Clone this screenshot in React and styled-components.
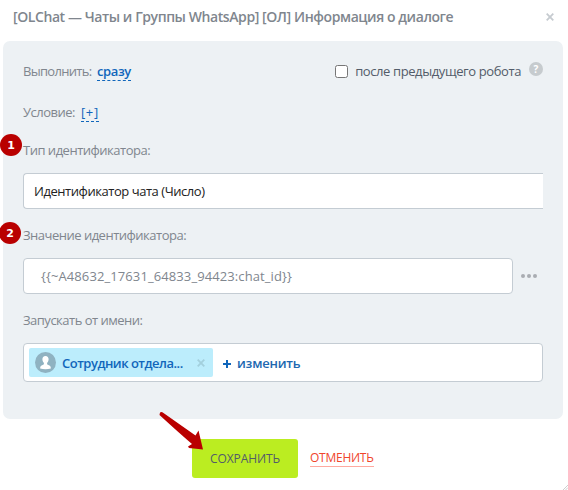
import React from 'react';
import styled, { createGlobalStyle } from 'styled-components';

const Global = createGlobalStyle`
  * { box-sizing: border-box; }
  body { margin: 0; background: #fff; overflow: hidden; }
`;

const Dialog = styled.main`
  position: relative;
  width: 568px;
  height: 490px;
  background: #fff;
  color: #80868e;
  font: 13px/20px "Open Sans", "Noto Sans", sans-serif;
`;

const Header = styled.header`
  display: flex;
  justify-content: space-between;
  height: 41px;
  padding: 7px 14px 0 13px;
`;

const Title = styled.h1`
  margin: 0;
  font-size: 14px;
  line-height: 20px;
  font-weight: 600;
  letter-spacing: -0.42px;
  color: #80868e;
  white-space: nowrap;
`;

const CloseIcon = styled.svg`
  width: 8px;
  height: 8px;
  flex: none;
  margin-top: ${p => p.$top || 0}px;
  stroke: ${p => p.$color};
  stroke-width: 1.8;
`;

const Panel = styled.section`
  display: flex;
  flex-direction: column;
  width: 560px;
  height: 378px;
  margin-left: 3px;
  padding: 20px 20px 0;
  border-radius: 7px;
  background: #edf1f4;
`;

const Row = styled.div`
  display: flex;
  height: 20px;
  margin-bottom: ${p => p.$gap}px;
`;

const Label = styled.span`
  height: 20px;
  letter-spacing: ${p => p.$spacing ?? -0.5}px;
  white-space: nowrap;
`;

const LeadLabel = styled(Label)`
  width: ${p => p.$width}px;
`;

const DashedLink = styled.a`
  height: 20px;
  width: ${p => p.$width}px;
  color: #1066bb;
  font-weight: ${p => p.$weight || 400};
  letter-spacing: ${p => p.$spacing || 0}px;
  white-space: nowrap;
  border-bottom: 1px dashed #1066bb;
`;

const AfterOption = styled.label`
  display: flex;
  margin-left: auto;
  color: #535c69;
`;

const Checkbox = styled.input`
  appearance: none;
  width: 13px;
  height: 13px;
  margin: 4px 7px 0 0;
  border: 1px solid #767676;
  border-radius: 2.5px;
  background: #fff;
`;

const Help = styled.span`
  width: 14px;
  height: 14px;
  margin: 1px 0 0 8px;
  border-radius: 50%;
  background: #c6cbce;
  color: #fff;
  font-size: 10px;
  font-weight: 700;
  line-height: 14px;
  text-align: center;
`;

const FieldLabel = styled(Label)`
  margin-bottom: 13px;
`;

const Select = styled.div`
  height: 36px;
  margin-bottom: 16px;
  padding-left: 10px;
  border: 1px solid #c4ccd3;
  border-right: 0;
  border-radius: 4px 0 0 4px;
  background: #fff;
  color: #222;
  line-height: 34px;
  letter-spacing: -0.45px;
`;

const ValueRow = styled.div`
  display: flex;
  align-items: center;
  height: 36px;
  margin-bottom: 16px;
`;

const ValueInput = styled.div`
  width: 490px;
  height: 36px;
  padding-left: 17px;
  border: 1px solid #c4ccd3;
  border-radius: 4px;
  background: #fff;
  line-height: 35px;
  letter-spacing: 0.1px;
`;

const Dots = styled.svg`
  width: 16px;
  height: 4px;
  margin-left: 8px;
  fill: #a9adb2;
`;

const UserBox = styled.div`
  display: flex;
  flex: none;
  height: 39px;
  padding: 4px 5px;
  border: 1px solid #c4ccd3;
  border-radius: 4px;
  background: #fff;
`;

const UserTag = styled.div`
  display: flex;
  width: 184px;
  height: 29px;
  padding: 4px 8px 0 6px;
  border-radius: 2px;
  background: #bcedfc;
  color: #1066bb;
  font-weight: 600;
`;

const Avatar = styled.svg`
  width: 21px;
  height: 21px;
  flex: none;
`;

const UserName = styled.span`
  flex: 1;
  margin: 1px 0 0 6px;
  white-space: nowrap;
  letter-spacing: -0.5px;
`;

const Change = styled.a`
  display: flex;
  gap: 6px;
  margin: 5px 0 0 10px;
  color: #2067b0;
  font-weight: 600;
  letter-spacing: -0.2px;
`;

const PlusIcon = styled.svg`
  width: 8px;
  height: 8px;
  margin-top: 7px;
  stroke: #1066bb;
  stroke-width: 2;
`;

const Footer = styled.footer`
  display: flex;
  padding: 20px 0 0 192px;
`;

const SaveButton = styled.button`
  width: 106px;
  height: 39px;
  padding: 0;
  border: 0;
  border-radius: 3px;
  background: #bbed21;
  color: #535c69;
  font: 12px/39px "Open Sans", "Noto Sans", sans-serif;
  letter-spacing: -0.1px;
`;

const CancelLink = styled.a`
  width: 64px;
  height: 19px;
  margin: 9px 0 0 12px;
  border-bottom: 1px solid #ffaaa0;
  color: #f0452c;
  font-size: 12px;
  line-height: 19px;
  white-space: nowrap;
  letter-spacing: -0.25px;
`;

const Marker = styled.span`
  position: absolute;
  left: ${p => p.$x}px;
  top: ${p => p.$y}px;
  width: 22px;
  height: 22px;
  border-radius: 50%;
  background: #b90000;
  color: #fff;
  font: bold 11px/23px "DejaVu Sans", sans-serif;
  text-align: center;
`;

const Arrow = styled.svg`
  position: absolute;
  left: 158px;
  top: 410px;
  width: 48px;
  height: 42px;
`;

const ResizeGrip = styled.svg`
  position: absolute;
  right: 0;
  bottom: 0;
  width: 5px;
  height: 5px;
  stroke: #aaa;
  stroke-width: 0.7;
`;

const Cross = props => (
  <CloseIcon viewBox="0 0 8 8" {...props}>
    <path d="M.7.7 7.3 7.3M7.3.7.7 7.3" />
  </CloseIcon>
);

export default function App() {
  return (
    <>
      <Global />
      <Dialog>
        <Header>
          <Title>[OLChat — Чаты и Группы WhatsApp] [ОЛ] Информация о диалоге</Title>
          <Cross $top={6} $color="#c6cbd0" />
        </Header>
        <Panel>
          <Row $gap={21}>
            <LeadLabel $width={74} $spacing={-0.7}>Выполнить:</LeadLabel>
            <DashedLink $width={34} $weight={600} $spacing={-0.4}>сразу</DashedLink>
            <AfterOption>
              <Checkbox type="checkbox" />
              <Label $spacing={-0.4}>после предыдущего робота</Label>
              <Help>?</Help>
            </AfterOption>
          </Row>
          <Row $gap={18}>
            <LeadLabel $width={58} $spacing={-0.5}>Условие:</LeadLabel>
            <DashedLink $width={18} $weight={500} $spacing={0.6}>[+]</DashedLink>
          </Row>
          <FieldLabel>Тип идентификатора:</FieldLabel>
          <Select>Идентификатор чата (Число)</Select>
          <FieldLabel>Значение идентификатора:</FieldLabel>
          <ValueRow>
            <ValueInput>{'{{~A48632_17631_64833_94423:chat_id}}'}</ValueInput>
            <Dots viewBox="0 0 16 4">
              <circle cx="2" cy="2" r="2" />
              <circle cx="8" cy="2" r="2" />
              <circle cx="14" cy="2" r="2" />
            </Dots>
          </ValueRow>
          <FieldLabel>Запускать от имени:</FieldLabel>
          <UserBox>
            <UserTag>
              <Avatar viewBox="0 0 21 21">
                <circle cx="10.5" cy="10.5" r="10.5" fill="#8fb2c1" />
                <path fill="#fff" d="M10.5 4c2 0 3.1 1.4 3.1 3.3 0 1.6-.6 2.8-1.5 3.5v1.3c0 .5.5.7 1.3 1 1.5.5 2.4 1.2 2.5 3.3-3.5 1-7.3 1-10.8 0 .1-2.1 1-2.8 2.5-3.3.8-.3 1.3-.5 1.3-1v-1.3c-.9-.7-1.5-1.9-1.5-3.5C7.4 5.4 8.5 4 10.5 4Z" />
              </Avatar>
              <UserName>Сотрудник отдела...</UserName>
              <Cross $top={7} $color="#a3d0dd" />
            </UserTag>
            <Change>
              <PlusIcon viewBox="0 0 8 8"><path d="M4 0v8M0 4h8" /></PlusIcon>
              <span>изменить</span>
            </Change>
          </UserBox>
        </Panel>
        <Footer>
          <SaveButton>СОХРАНИТЬ</SaveButton>
          <CancelLink>ОТМЕНИТЬ</CancelLink>
        </Footer>
        <Marker $x={0} $y={134}>1</Marker>
        <Marker $x={-1} $y={222}>2</Marker>
        <Arrow viewBox="0 0 48 42">
          <path fill="#b90000" d="M2 2.5Q3.5 1.2 5.5 3L37.5 25.5 40.5 20.5 45 39.5 31 38 30 36.5 34 34Q20 22 1.5 5Z" />
        </Arrow>
        <ResizeGrip viewBox="0 0 6 6"><path d="M0 6 6 0M3 6 6 3" /></ResizeGrip>
      </Dialog>
    </>
  );
}
